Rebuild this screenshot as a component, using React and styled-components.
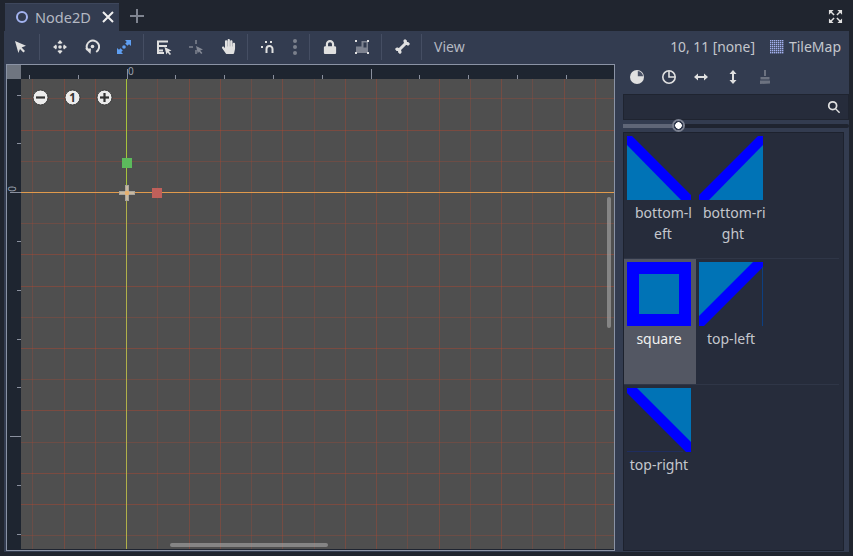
import React from 'react';
import styled, { createGlobalStyle } from 'styled-components';
import { FaHandPaper, FaLock, FaBone } from 'react-icons/fa';

const GlobalStyle = createGlobalStyle`
  html, body {
    margin: 0;
    padding: 0;
    background: #20252f;
    overflow: hidden;
  }
`;

// grid lines as offsets from the origin, in cells
const ROWS = [-3, -2, -1, 1, 2, 3, 4, 5, 6, 7, 8, 9, 10, 11];
const COLS = [-3, -2, -1, 1, 2, 3, 4, 5, 6, 7, 8, 9, 10, 11, 12, 13, 14, 15];
const STRONG_ROWS = [-2, 2, 3, 5, 7, 9, 10];
const STRONG_COLS = [-2, -1, 2, 3, 5, 7, 8, 10, 12, 14, 15];
const ORIGIN_X = 105.5;
const ORIGIN_Y = 113.5;
const TICK = 48.8;

const Grid = () => (
  <GridSvg width="593" height="470">
    {COLS.map((c) => {
      const x = Math.round(ORIGIN_X + c * 31.25 - 0.5) + 0.5;
      return <line key={c} x1={x} x2={x} y1="0" y2="470" stroke="#b8482f" strokeOpacity={STRONG_COLS.includes(c) ? 0.36 : 0.25} />;
    })}
    {ROWS.map((r) => {
      const y = Math.round(ORIGIN_Y + r * 31.2 - 0.5) + 0.5;
      return <line key={r} x1="0" x2="593" y1={y} y2={y} stroke="#b8482f" strokeOpacity={STRONG_ROWS.includes(r) ? 0.42 : 0.28} />;
    })}
    <line x1={ORIGIN_X} x2={ORIGIN_X} y1="0" y2="108" stroke="#a6c23c" />
    <line x1={ORIGIN_X} x2={ORIGIN_X} y1="108" y2="470" stroke="#b0b04a" />
    <line x1="0" x2="593" y1={ORIGIN_Y} y2={ORIGIN_Y} stroke="#e09a4c" />
    <rect x="101" y="79" width="10" height="10" fill="#5cba5c" />
    <rect x="131" y="109" width="10" height="10" fill="#c0605a" />
    <g fill="#c8b8a0" stroke="#a8a49c" strokeWidth="1">
      <rect x="104.5" y="106.5" width="3" height="15" />
      <rect x="98.5" y="112.5" width="15" height="3" />
    </g>
    <rect x="104" y="112" width="4" height="4" fill="#e6b070" />
  </GridSvg>
);

const TopRuler = () => (
  <RulerSvg width="593" height="14">
    {Array.from({ length: 13 }, (_, i) => {
      const x = Math.round(8 + i * TICK) + 0.5;
      const big = i === 2 || i === 7 || i === 12;
      return <line key={i} x1={x} x2={x} y1={big ? 4 : 10} y2="14" stroke="#8a909e" />;
    })}
  </RulerSvg>
);

const LeftRuler = () => (
  <RulerSvg width="14" height="470">
    {Array.from({ length: 11 }, (_, i) => {
      const y = Math.round(15.5 + i * TICK) + 0.5;
      const big = i === 2 || i === 7;
      return <line key={i} x1={big ? 3 : 10} x2="14" y1={y} y2={y} stroke="#8a909e" />;
    })}
  </RulerSvg>
);

const Icon = ({ children, size = 16, color = '#e0e0e0' }) => (
  <svg width={size} height={size} viewBox="0 0 16 16" fill={color}>{children}</svg>
);

const SelectIcon = () => (
  <Icon><path d="M3 2 L14 6.8 L9.6 8.4 L13 12 L11.4 13.6 L8 10 L6.4 14 Z" /></Icon>
);

const MoveIcon = () => (
  <Icon>
    <circle cx="8" cy="8" r="1.8" />
    <path d="M8 1 L10.6 4 L9 4.8 L7 4.8 L5.4 4 Z M8 15 L10.6 12 L9 11.2 L7 11.2 L5.4 12 Z M1 8 L4 5.4 L4.8 7 L4.8 9 L4 10.6 Z M15 8 L12 5.4 L11.2 7 L11.2 9 L12 10.6 Z" />
  </Icon>
);

const RotateIcon = () => (
  <Icon>
    <circle cx="8.5" cy="7.5" r="1.8" />
    <path d="M12.2 13 A6.2 6.2 0 1 0 3.6 11" fill="none" stroke="#e0e0e0" strokeWidth="2" />
    <path d="M1 9.5 L7 9.5 L6.5 15 Z" />
  </Icon>
);

const ScaleIcon = () => (
  <Icon color="#5f9ff2">
    <circle cx="8" cy="8" r="1.8" />
    <path d="M9 1 L15 1 L15 7 L13 5.2 L11.4 6.8 L9.2 4.6 L10.8 3 Z M1 9 L1 15 L7 15 L5.2 13 L6.8 11.4 L4.6 9.2 L3 10.8 Z" />
  </Icon>
);

const ListSelectIcon = () => (
  <Icon>
    <path d="M1 1.5 H12 V3.5 H3 V6 H11 V8 H3 V10.5 H7 V12.5 H3 V13 H8 V15 H1 Z" />
    <path d="M8.5 8 L15.5 11.5 L12.8 12.6 L15 15 L13.8 16 L11.6 13.6 L10.4 15.6 Z" />
  </Icon>
);

const PivotIcon = () => (
  <Icon color="#6c7280">
    <path d="M7 1 H9 V5 H7 Z M1 7 H5 V9 H1 Z M7 11 H9 V15 H7 Z" />
    <path d="M8 7 L15 10.5 L12.2 11.6 L14.4 14 L13.2 15 L11 12.6 L9.8 14.6 Z" fill="#838894" />
  </Icon>
);

const SnapIcon = () => (
  <Icon>
    <path d="M6.5 14 V10 A3 3 0 0 1 12.5 10 V14" fill="none" stroke="#e0e0e0" strokeWidth="2" />
    <rect x="1" y="7" width="2" height="2" />
    <rect x="5" y="2" width="2" height="2" />
    <rect x="10" y="2" width="2" height="2" />
  </Icon>
);

const DotsIcon = () => (
  <Icon color="#7b808c">
    <circle cx="8" cy="2" r="2" />
    <circle cx="8" cy="8" r="2" />
    <circle cx="8" cy="14" r="2" />
  </Icon>
);

const GroupIcon = () => (
  <Icon>
    <path d="M2 7.5 H7.5 V2 H14 V14 H2 Z M9.5 3.5 V8.5 H12.5 V3.5 Z" fill="#7e8390" fillRule="evenodd" />
    <rect x="1" y="1" width="2" height="2" />
    <rect x="13" y="1" width="2" height="2" />
    <rect x="1" y="13" width="2" height="2" />
    <rect x="13" y="13" width="2" height="2" />
  </Icon>
);

const RotLeftIcon = () => (
  <Icon>
    <circle cx="8" cy="8" r="7" />
    <path d="M8.8 1.9 A6.2 6.2 0 0 1 14.1 7.2 L8.8 7.2 Z" fill="#4a5266" />
  </Icon>
);

const RotRightIcon = () => (
  <Icon>
    <circle cx="8" cy="8" r="6.2" fill="none" stroke="#e0e0e0" strokeWidth="1.6" />
    <path d="M7.2 2 H8.8 V7.2 H14 V8.8 H7.2 Z" />
  </Icon>
);

const FlipHIcon = () => (
  <Icon><path d="M1 8 L5 4.5 V7 H11 V4.5 L15 8 L11 11.5 V9 H5 V11.5 Z" /></Icon>
);

const FlipVIcon = () => (
  <Icon><path d="M8 1 L11.5 5 H9 V11 H11.5 L8 15 L4.5 11 H7 V5 H4.5 Z" /></Icon>
);

const BrushIcon = () => (
  <Icon color="#6c7280">
    <path d="M7 1 H9 V7 H7 Z M3.5 8 H12.5 V10.5 H3.5 Z M3 11.5 H13 V14.5 L3 15 Z" />
  </Icon>
);

const SearchIcon = () => (
  <Icon size={14}>
    <circle cx="6.5" cy="6.5" r="4.5" fill="none" stroke="#e0e0e0" strokeWidth="2" />
    <path d="M10 9 L15 14 L13.8 15.2 L9 10.4 Z" />
  </Icon>
);

const FullscreenIcon = () => (
  <Icon size={15}>
    <path d="M1 1 H6 L1 6 Z M15 1 H10 L15 6 Z M1 15 H6 L1 10 Z M15 15 H10 L15 10 Z" />
    <path d="M3 3 L6.5 6.5 M13 3 L9.5 6.5 M3 13 L6.5 9.5 M13 13 L9.5 9.5" stroke="#e0e0e0" strokeWidth="1.6" />
  </Icon>
);

const TileMapIcon = () => (
  <svg width="14" height="14" viewBox="0 0 14 14" fill="#a3b0ee">
    {Array.from({ length: 49 }, (_, i) => (
      <rect key={i} x={(i % 7) * 2} y={Math.floor(i / 7) * 2} width="1.4" height="1.4" />
    ))}
  </svg>
);

const ZoomIcon = ({ kind }) => (
  <svg width="17" height="17" viewBox="0 0 17 17">
    <circle cx="8.5" cy="8.5" r="7.5" fill="#ececec" stroke="#3c3c3c" />
    {kind === 'one' ? (
      <text x="8.5" y="12.6" textAnchor="middle" fontFamily="'Noto Sans', sans-serif" fontWeight="700" fontSize="11.5" fill="#333">1</text>
    ) : (
      <rect x="4" y="7.4" width="9" height="2.2" fill="#333" />
    )}
    {kind === 'plus' && <rect x="7.4" y="4" width="2.2" height="9" fill="#333" />}
  </svg>
);

const TILE_BLUE = '#0000ff';
const TILE_TEAL = '#0073b6';

const Tile = ({ kind }) => (
  <TileSvg width="64" height="64" viewBox="0 0 64 64">
    {kind === 'bottom-left' && (
      <>
        <polygon points="0,0 64,64 0,64" fill={TILE_TEAL} />
        <polygon points="0,0 5,0 64,59 64,64 54,64 0,9" fill={TILE_BLUE} />
      </>
    )}
    {kind === 'bottom-right' && (
      <>
        <polygon points="64,0 64,64 0,64" fill={TILE_TEAL} />
        <polygon points="64,0 59,0 0,59 0,64 10,64 64,9" fill={TILE_BLUE} />
      </>
    )}
    {kind === 'square' && (
      <>
        <rect width="64" height="64" fill={TILE_BLUE} />
        <rect x="12" y="12" width="40" height="40" fill={TILE_TEAL} />
      </>
    )}
    {kind === 'top-left' && (
      <>
        <polygon points="0,0 64,0 0,64" fill={TILE_TEAL} />
        <polygon points="54,0 64,0 64,5 5,64 0,64 0,54" fill={TILE_BLUE} />
        <rect x="63" y="5" width="1" height="59" fill="#0d3f80" />
      </>
    )}
    {kind === 'top-right' && (
      <>
        <polygon points="0,0 64,0 64,64" fill={TILE_TEAL} />
        <polygon points="0,0 10,0 64,54 64,64 59,64 0,5" fill={TILE_BLUE} />
        <rect x="0" y="63.4" width="56" height="0.6" fill="#1b2f78" />
      </>
    )}
  </TileSvg>
);

const App = () => (
  <Page>
    <GlobalStyle />
    <TabBar>
      <Tab>
        <TabRing />
        <TabTitle>Node2D</TabTitle>
        <TabClose>
          <svg width="12" height="12" viewBox="0 0 12 12">
            <path d="M1 1 L11 11 M11 1 L1 11" stroke="#f0f0f0" strokeWidth="2" />
          </svg>
        </TabClose>
      </Tab>
      <AddTab>
        <svg width="14" height="14" viewBox="0 0 14 14">
          <path d="M7 0 V14 M0 7 H14" stroke="#7f8490" strokeWidth="2" />
        </svg>
      </AddTab>
      <TabSpacer />
      <FullscreenIcon />
    </TabBar>

    <Panel>
      <Toolbar>
        <ToolButton><SelectIcon /></ToolButton>
        <Sep />
        <ToolButton><MoveIcon /></ToolButton>
        <ToolButton><RotateIcon /></ToolButton>
        <ToolButton><ScaleIcon /></ToolButton>
        <Sep />
        <ToolButton><ListSelectIcon /></ToolButton>
        <ToolButton><PivotIcon /></ToolButton>
        <ToolButton><FaHandPaper size={15} color="#e0e0e0" /></ToolButton>
        <Sep />
        <ToolButton><SnapIcon /></ToolButton>
        <ToolButton $narrow><DotsIcon /></ToolButton>
        <Sep />
        <ToolButton><FaLock size={14} color="#e0e0e0" /></ToolButton>
        <ToolButton><GroupIcon /></ToolButton>
        <Sep />
        <ToolButton><BoneIcon size={15} color="#e0e0e0" /></ToolButton>
        <Sep />
        <ViewLabel>View</ViewLabel>
        <ToolStatus>10, 11 [none]</ToolStatus>
        <TileMapLabel>
          <TileMapIcon />
          TileMap
        </TileMapLabel>
      </Toolbar>

      <Body>
        <Viewport>
          <Corner />
          <RulerTop>
            <TopRuler />
            <ZeroTop>0</ZeroTop>
          </RulerTop>
          <RulerLeft>
            <LeftRuler />
            <ZeroLeft>0</ZeroLeft>
          </RulerLeft>
          <Canvas>
            <Grid />
            <ZoomBar>
              <ZoomIcon kind="minus" />
              <ZoomIcon kind="one" />
              <ZoomIcon kind="plus" />
            </ZoomBar>
            <ScrollH />
            <ScrollV />
          </Canvas>
        </Viewport>

        <Dock>
          <DockTools>
            <DockButton><RotLeftIcon /></DockButton>
            <DockButton><RotRightIcon /></DockButton>
            <DockButton><FlipHIcon /></DockButton>
            <DockButton><FlipVIcon /></DockButton>
            <DockButton><BrushIcon /></DockButton>
          </DockTools>
          <SearchBox><SearchIcon /></SearchBox>
          <Slider>
            <SliderFill />
            <SliderGrab />
          </Slider>
          <TileList>
            <TileRow>
              <TileItem>
                <Tile kind="bottom-left" />
                <TileLabel $shift={8}>bottom-l<br />eft</TileLabel>
              </TileItem>
              <TileItem>
                <Tile kind="bottom-right" />
                <TileLabel $shift={4}>bottom-ri<br />ght</TileLabel>
              </TileItem>
            </TileRow>
            <TileRow>
              <TileItem $selected>
                <Tile kind="square" />
                <TileLabel $selected>square</TileLabel>
              </TileItem>
              <TileItem>
                <Tile kind="top-left" />
                <TileLabel>top-left</TileLabel>
              </TileItem>
            </TileRow>
            <TileRow $last>
              <TileItem>
                <Tile kind="top-right" />
                <TileLabel>top-right</TileLabel>
              </TileItem>
            </TileRow>
          </TileList>
        </Dock>
      </Body>
    </Panel>
  </Page>
);

export default App;

const Page = styled.div`
  width: 853px;
  height: 556px;
  display: flex;
  flex-direction: column;
  background: #20252f;
  font-family: "Noto Sans", sans-serif;
  font-size: 14px;
  color: #c4c7cd;
  overflow: hidden;
`;

const TabBar = styled.div`
  height: 31px;
  flex: none;
  display: flex;
  align-items: flex-end;
  padding: 0 10px 0 5px;
  box-sizing: border-box;
  svg { flex: none; }
  > svg:last-child { margin-bottom: 7px; }
`;

const Tab = styled.div`
  width: 114px;
  height: 28px;
  box-sizing: border-box;
  display: flex;
  align-items: center;
  padding: 0 5px 2px 11px;
  background: #333c50;
  border-top: 1px solid #3e475c;
`;

const TabRing = styled.div`
  width: 12px;
  height: 12px;
  box-sizing: border-box;
  border: 2px solid #a3b3f0;
  border-radius: 50%;
`;

const TabTitle = styled.span`
  margin-left: 7px;
  font-size: 14.5px;
  color: #b4b8c2;
`;

const TabClose = styled.div`
  margin-left: auto;
  display: flex;
`;

const AddTab = styled.div`
  margin: 0 0 8px 11px;
  display: flex;
`;

const TabSpacer = styled.div`
  flex: 1;
`;

const Panel = styled.div`
  flex: 1;
  min-height: 0;
  margin: 0 4px 4px 4px;
  display: flex;
  flex-direction: column;
  background: #333c50;
`;

const Toolbar = styled.div`
  height: 33px;
  flex: none;
  box-sizing: border-box;
  display: flex;
  align-items: center;
  padding: 0 8px 2px 0;
`;

const ToolButton = styled.div`
  width: ${(p) => (p.$narrow ? 22 : 32)}px;
  height: 26px;
  flex: none;
  display: flex;
  align-items: center;
  justify-content: center;
`;

const BoneIcon = styled(FaBone)`
  transform: rotate(-45deg);
`;

const Sep = styled.div`
  width: 1px;
  height: 26px;
  margin: 0 4px 0 3px;
  flex: none;
  background: #454e63;
`;

const ViewLabel = styled.span`
  margin-left: 8px;
  color: #b4b8c2;
`;

const ToolStatus = styled.span`
  margin-left: auto;
  font-size: 13.8px;
`;

const TileMapLabel = styled.span`
  margin-left: 15px;
  display: flex;
  align-items: center;
  gap: 5px;
`;

const Body = styled.div`
  flex: 1;
  min-height: 0;
  display: flex;
  gap: 8px;
`;

const Viewport = styled.div`
  width: 609px;
  height: 487px;
  margin-left: 2px;
  flex: none;
  box-sizing: border-box;
  border: 1px solid #8b93a5;
  display: grid;
  grid-template-columns: 14px 593px;
  grid-template-rows: 14px 470px;
  background: #1e2430;
`;

const Corner = styled.div`
  background: #6f7580;
`;

const RulerTop = styled.div`
  position: relative;
  background: #1e2530;
`;

const RulerLeft = styled.div`
  position: relative;
  background: #1e2530;
`;

const RulerSvg = styled.svg`
  display: block;
`;

const ZeroTop = styled.span`
  position: absolute;
  left: 107px;
  top: 1px;
  font-size: 10px;
  line-height: 10px;
  color: #9aa0ae;
`;

const ZeroLeft = styled.span`
  position: absolute;
  left: 2px;
  top: 105px;
  font-size: 10px;
  line-height: 10px;
  color: #9aa0ae;
  transform: rotate(-90deg);
`;

const Canvas = styled.div`
  position: relative;
  background: #4f4f4f;
  overflow: hidden;
`;

const GridSvg = styled.svg`
  display: block;
`;

const ZoomBar = styled.div`
  position: absolute;
  left: 11px;
  top: 10px;
  display: flex;
  gap: 15px;
`;

const ScrollH = styled.div`
  position: absolute;
  left: 149px;
  bottom: 2px;
  width: 158px;
  height: 4px;
  border-radius: 2px;
  background: rgba(170, 170, 170, 0.6);
`;

const ScrollV = styled.div`
  position: absolute;
  right: 3px;
  top: 118px;
  width: 4px;
  height: 131px;
  border-radius: 2px;
  background: rgba(170, 170, 170, 0.6);
`;

const Dock = styled.div`
  flex: 1;
  min-width: 0;
  height: 487px;
  display: flex;
  flex-direction: column;
`;

const DockTools = styled.div`
  height: 30px;
  flex: none;
  box-sizing: border-box;
  padding-bottom: 4px;
  display: flex;
  align-items: center;
  gap: 4px;
`;

const DockButton = styled.div`
  width: 28px;
  height: 26px;
  display: flex;
  align-items: center;
  justify-content: center;
`;

const SearchBox = styled.div`
  height: 26px;
  flex: none;
  box-sizing: border-box;
  display: flex;
  align-items: center;
  justify-content: flex-end;
  padding-right: 7px;
  background: #262c3b;
  border: 1px solid #1f2430;
`;

const Slider = styled.div`
  position: relative;
  height: 4px;
  margin: 4px 0;
  flex: none;
  background: #1f2430;
  border-radius: 2px;
`;

const SliderFill = styled.div`
  width: 55px;
  height: 100%;
  background: #5f6677;
`;

const SliderGrab = styled.div`
  position: absolute;
  left: 49px;
  top: -5px;
  width: 13px;
  height: 13px;
  box-sizing: border-box;
  border-radius: 50%;
  background: radial-gradient(circle, #fff 0 3px, #333c50 3.5px 4.5px, #7a8090 5px);
`;

const TileList = styled.div`
  flex: 1;
  min-height: 0;
  box-sizing: border-box;
  margin-right: 5px;
  padding-right: 4px;
  background: #262c3b;
  border: 1px solid #1d222e;
`;

const TileRow = styled.div`
  height: 126px;
  display: flex;
  border-bottom: ${(p) => (p.$last ? 'none' : '1px solid #2f3647')};
  box-sizing: border-box;
`;

const TileItem = styled.div`
  width: 72px;
  height: ${(p) => (p.$selected ? 125 : 100)}px;
  box-sizing: border-box;
  padding: 3px 0 0 3px;
  background: ${(p) => (p.$selected ? '#535763' : 'transparent')};
`;

const TileSvg = styled.svg`
  display: block;
`;

const TileLabel = styled.div`
  width: 64px;
  margin-top: 2px;
  padding-left: ${(p) => p.$shift || 0}px;
  box-sizing: border-box;
  text-align: center;
  white-space: nowrap;
  line-height: 21px;
  color: ${(p) => (p.$selected ? '#f0f0f0' : '#c4c7cd')};
`;
